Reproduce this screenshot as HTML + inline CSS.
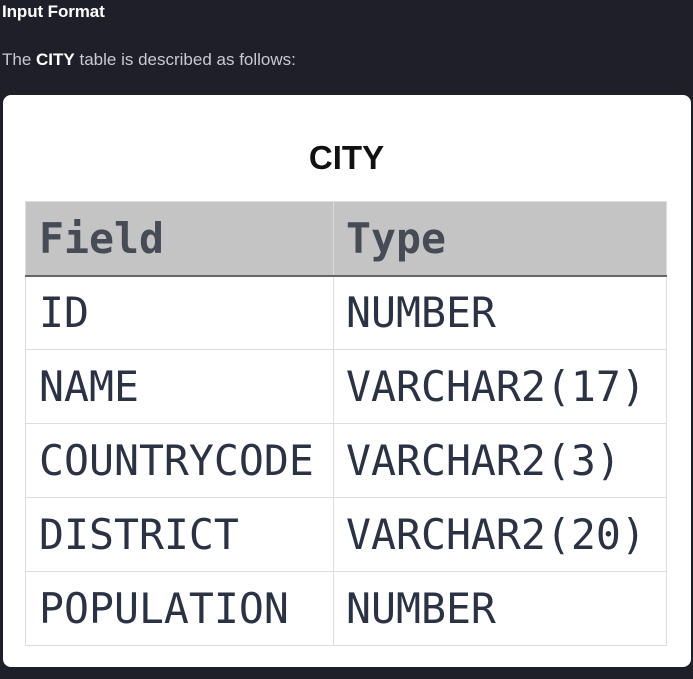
<!DOCTYPE html>
<html><head><style>
body{margin:0;width:693px;height:679px;background:#1f1f29;position:relative;overflow:hidden;font-family:"Liberation Sans",sans-serif}
.t1{position:absolute;left:2px;top:2px;color:#fff;font-weight:bold;font-size:17px;letter-spacing:-0.1px}
.t2{position:absolute;left:2px;top:50px;color:#c9c9d2;font-size:17px;letter-spacing:0}
.t2 b{color:#fff}
.card{position:absolute;left:3px;top:95px;width:688px;height:572px;background:#fff;border-radius:8px}
.city{position:absolute;left:0;width:693px;top:139px;text-align:center;font-weight:bold;font-size:33px;color:#111}
table{position:absolute;left:25px;top:201px;border-collapse:collapse;font-family:"DejaVu Sans Mono",monospace;font-size:41.5px;color:#2b3244}
td,th{border:1px solid #ddd;padding:0 0 0 13px;text-align:left;height:74px;box-sizing:border-box}
th{background:#c4c4c4;color:#464b55;border-bottom:2px solid #666;font-weight:bold}
td.a,th.a{width:308px}td.b,th.b{width:333px;padding-left:12px}
</style></head><body>
<div class="t1">Input Format</div>
<div class="t2">The <b>CITY</b> table is described as follows:</div>
<div class="card"></div>
<div class="city">CITY</div>
<table>
<tr><th class="a">Field</th><th class="b">Type</th></tr>
<tr><td class="a">ID</td><td class="b">NUMBER</td></tr>
<tr><td class="a">NAME</td><td class="b">VARCHAR2(17)</td></tr>
<tr><td class="a">COUNTRYCODE</td><td class="b">VARCHAR2(3)</td></tr>
<tr><td class="a">DISTRICT</td><td class="b">VARCHAR2(20)</td></tr>
<tr><td class="a">POPULATION</td><td class="b">NUMBER</td></tr>
</table>
</body></html>
